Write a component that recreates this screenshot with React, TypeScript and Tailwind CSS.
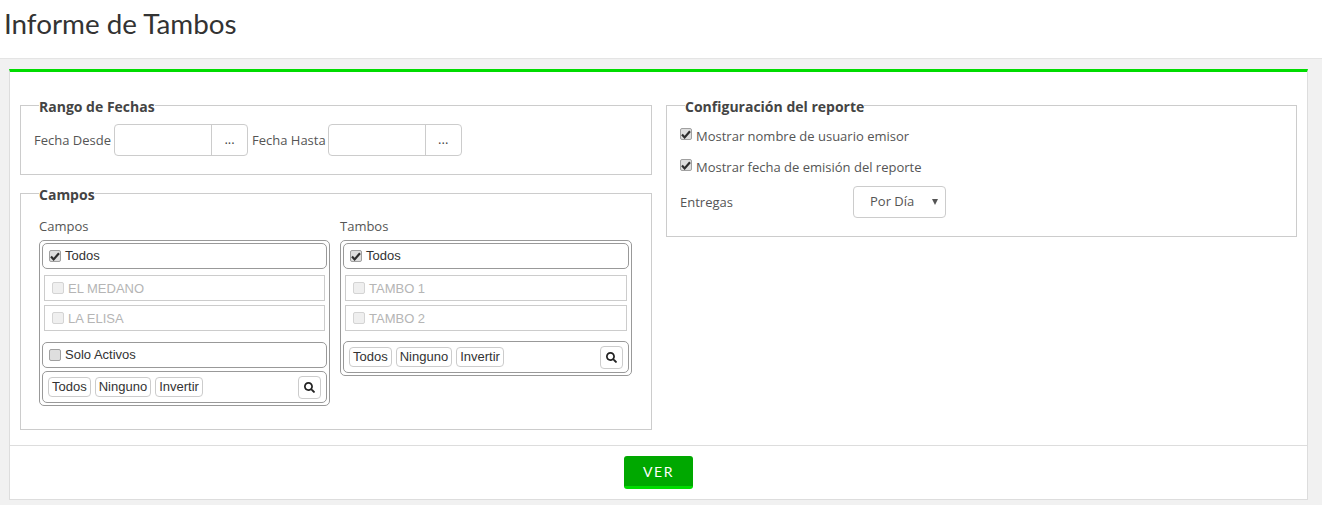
import { FaSearch } from "react-icons/fa";

const os = "font-['Open_Sans',sans-serif]";
const ar = "font-['Liberation_Sans',Arial,sans-serif]";

function Check({ checked = false, disabled = false, extra = "" }: { checked?: boolean; disabled?: boolean; extra?: string }) {
  return (
    <span
      className={`flex h-[12px] w-[12px] shrink-0 items-center justify-center rounded-[2px] border ${
        disabled ? "border-[#d4d4d4] bg-[#efefef]" : "border-[#a0a0a0] bg-[#dedede]"
      } ${extra}`}
    >
      {checked && (
        <svg width="10" height="9" viewBox="0 0 10 9">
          <path d="M1 4.6 L3.6 7.4 L9 1.2" fill="none" stroke="#2e2e2e" strokeWidth="2.2" />
        </svg>
      )}
    </span>
  );
}

function Legend({ children, ml }: { children: string; ml: string }) {
  return (
    <legend className={`pt-[4px] text-[14px] leading-[18px] font-bold text-[#444] ${ml} ${os}`}>{children}</legend>
  );
}

function DateField({ label, mr }: { label: string; mr: string }) {
  return (
    <>
      <span className={`pt-[2px] text-[13px] text-[#555] ${mr}`}>{label}</span>
      <div className="flex h-[32px] w-[134px] overflow-hidden rounded-[4px] border border-[#ccc] bg-white">
        <div className="w-[97px] border-r border-[#ccc]" />
        <div className="flex flex-1 items-center justify-center pb-[1px] text-[13px] text-[#444]">...</div>
      </div>
    </>
  );
}

function HeadRow({ label, checked, mb }: { label: string; checked: boolean; mb: string }) {
  return (
    <div className={`flex h-[26px] items-center gap-[4px] rounded-[5px] border border-[#999] pl-[6px] text-[13px] text-[#333] ${ar} ${mb}`}>
      <Check checked={checked} />
      <span>{label}</span>
    </div>
  );
}

function Item({ label, mb }: { label: string; mb: string }) {
  return (
    <div className={`mx-[2px] flex h-[26px] items-center gap-[4px] border border-[#ccc] pl-[7px] text-[13px] text-[#b5b5b5] ${ar} ${mb}`}>
      <Check disabled />
      <span className="pt-[2px]">{label}</span>
    </div>
  );
}

function Toolbar() {
  return (
    <div className={`flex h-[32px] items-center gap-[4px] rounded-[5px] border border-[#999] pl-[5px] pr-[5px] text-[13px] text-[#333] ${ar}`}>
      {["Todos", "Ninguno", "Invertir"].map((t) => (
        <span key={t} className="flex h-[20px] items-center rounded-[4px] border border-[#ccc] px-[3px]">
          {t}
        </span>
      ))}
      <span className="ml-auto flex h-[23px] w-[23px] items-center justify-center rounded-[4px] border border-[#ccc] text-[#222]">
        <FaSearch size={11} />
      </span>
    </div>
  );
}

function Picker({ title, items, active, w }: { title: string; items: string[]; active?: boolean; w: string }) {
  return (
    <div className={`flex flex-col ${w}`}>
      <div className={`mb-[5px] text-[13px] leading-[18px] text-[#555] ${os}`}>{title}</div>
      <div className="flex flex-col rounded-[5px] border border-[#999] p-[2px]">
        <HeadRow label="Todos" checked mb="mb-[6px]" />
        <Item label={items[0]} mb="mb-[4px]" />
        <Item label={items[1]} mb={active ? "mb-[11px]" : "mb-[10px]"} />
        {active && <HeadRow label="Solo Activos" checked={false} mb="mb-[3px]" />}
        <Toolbar />
      </div>
    </div>
  );
}

export default function App() {
  return (
    <div className={`h-[505px] overflow-hidden bg-[#f1f1f1] ${os}`}>
      <header className="h-[59px] border-b border-[#e4e4e4] bg-white pl-[4px] pt-[4px]">
        <h1 className="font-['Lato',sans-serif] text-[27.8px] leading-[40px] font-normal text-[#333]">Informe de Tambos</h1>
      </header>
      <main className="ml-[9px] mt-[10px] h-[431px] w-[1299px] border-x border-b border-[#ddd] border-t-[3px] border-t-[#00dc00] bg-white">
        <div className="grid h-[373px] grid-cols-[632px_631px] gap-x-[14px] px-[10px] pt-[22px]">
          <div className="flex flex-col gap-[7px]">
            <fieldset className="h-[81px] border border-[#ccc] pl-[13px]">
              <Legend ml="ml-[5px]">Rango de Fechas</Legend>
              <div className="mt-[8px] flex items-center">
                <DateField label="Fecha Desde" mr="mr-[3px]" />
                <span className="w-[4px]" />
                <DateField label="Fecha Hasta" mr="mr-[2px]" />
              </div>
            </fieldset>
            <fieldset className="h-[248px] border border-[#ccc] pl-[18px]">
              <Legend ml="ml-0">Campos</Legend>
              <div className="mt-[13px] flex items-start gap-[10px]">
                <Picker title="Campos" items={["EL MEDANO", "LA ELISA"]} active w="w-[291px]" />
                <Picker title="Tambos" items={["TAMBO 1", "TAMBO 2"]} w="w-[292px]" />
              </div>
            </fieldset>
          </div>
          <div>
            <fieldset className="h-[143px] border border-[#ccc] pl-[13px] text-[13px] text-[#555]">
              <Legend ml="ml-[5px]">Configuración del reporte</Legend>
              <div className="mt-[11px] flex items-center gap-[4px] leading-[18px]">
                <Check checked extra="-mt-[4px]" />
                <span>Mostrar nombre de usuario emisor</span>
              </div>
              <div className="mt-[13px] flex items-center gap-[4px] leading-[18px]">
                <Check checked extra="-mt-[4px]" />
                <span>Mostrar fecha de emisión del reporte</span>
              </div>
              <div className="mt-[10px] flex items-center">
                <span className="w-[173px] pt-[2px]">Entregas</span>
                <div className="relative flex h-[32px] w-[93px] items-center rounded-[4px] border border-[#ccc] pl-[16px]">
                  Por Día
                  <span className="absolute right-[7px] top-[12px] h-0 w-0 border-x-[3.5px] border-t-[6px] border-x-transparent border-t-[#555]" />
                </div>
              </div>
            </fieldset>
          </div>
        </div>
        <footer className="flex h-[55px] items-start justify-center border-t border-[#ddd] pt-[10px]">
          <button className="h-[33px] w-[69px] rounded-[3px] border-b-[3px] border-[#00dc00] bg-[#00a800] font-['Lato',sans-serif] text-[14px] font-normal tracking-[1.5px] text-white">
            VER
          </button>
        </footer>
      </main>
    </div>
  );
}
